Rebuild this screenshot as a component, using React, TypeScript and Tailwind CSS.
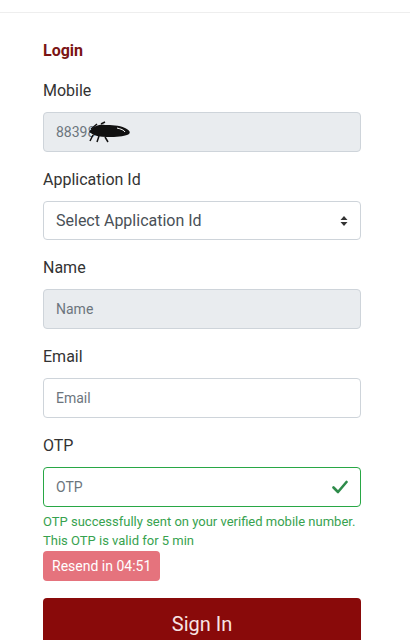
import React from 'react';

const Label: React.FC<{ children: React.ReactNode }> = ({ children }) => (
  <label className="block text-[16px] leading-6 text-[#333] mb-[9px]">{children}</label>
);

const App: React.FC = () => {
  return (
    <div className="min-h-screen bg-white font-['Roboto',sans-serif]">
      <div className="pt-3">
        <div className="border-t border-[#eeeeee] mr-1 pl-[43px] pr-[49px] pt-[27px]">
          <h2 className="text-[16px] leading-[22px] font-bold text-[#7b1414] mb-[17px]">Login</h2>

          {/* Mobile */}
          <div className="mb-4">
            <Label>Mobile</Label>
            <div className="h-10 rounded border border-[#ced4da] bg-[#e9ecef] flex items-center px-3 text-[14px] text-[#6c757d]">
              <span>88398</span>
              <svg width="46" height="22" viewBox="0 0 46 22" className="-ml-2">
                <path d="M2 11c4-6 10-8 16-7 6 0 14 0 20 3 4 2 6 4 4 6-3 2-10 3-18 3-6 0-12 0-17-2z" fill="#111" />
                <path d="M6 14l-3 6M12 15l-2 6M18 16l3 5M4 8l6-5M14 3l4-2" stroke="#111" strokeWidth="1.5" />
                <path d="M30 7c4 1 7 2 8 4" stroke="#fff" strokeWidth="1" fill="none" />
              </svg>
            </div>
          </div>

          {/* Application Id */}
          <div className="mb-4">
            <Label>Application Id</Label>
            <div className="h-[39px] rounded border border-[#ced4da] bg-white flex items-center justify-between pl-3 pr-3 text-[16px] text-[#495057]">
              <span>Select Application Id</span>
              <svg width="8" height="12" viewBox="0 0 8 12">
                <path d="M4 1L7.5 5H0.5z" fill="#333" />
                <path d="M4 11L7.5 7H0.5z" fill="#333" />
              </svg>
            </div>
          </div>

          {/* Name */}
          <div className="mb-4">
            <Label>Name</Label>
            <div className="h-10 rounded border border-[#ced4da] bg-[#e9ecef] flex items-center px-3 text-[14px] text-[#6c757d]">
              Name
            </div>
          </div>

          {/* Email */}
          <div className="mb-4">
            <Label>Email</Label>
            <div className="h-10 rounded border border-[#ced4da] bg-white flex items-center px-3 text-[14px] text-[#6c757d]">
              Email
            </div>
          </div>

          {/* OTP */}
          <div>
            <Label>OTP</Label>
            <div className="h-10 rounded border border-[#28a745] bg-white flex items-center justify-between px-3 text-[14px] text-[#6c757d]">
              <span>OTP</span>
              <svg width="16" height="14" viewBox="0 0 16 14">
                <path d="M1.5 7.5l4.5 4.5L14.5 2" stroke="#2e8b4a" strokeWidth="2.6" fill="none" strokeLinecap="round" strokeLinejoin="round" />
              </svg>
            </div>
            <p className="mt-[5px] text-[13px] leading-[19px] text-[#37a24f]">
              OTP successfully sent on your verified mobile number.
              <br />
              This OTP is valid for 5 min
            </p>
            <button className="mt-[1px] h-[30px] px-[9px] rounded bg-[#e5737d] text-white text-[14px]">
              Resend in 04:51
            </button>
          </div>

          <button className="mt-[17px] w-full h-[52px] rounded bg-[#890a0a] text-[#f8e4e4] text-[20px]">
            Sign In
          </button>
        </div>
      </div>
    </div>
  );
};

export default App;
